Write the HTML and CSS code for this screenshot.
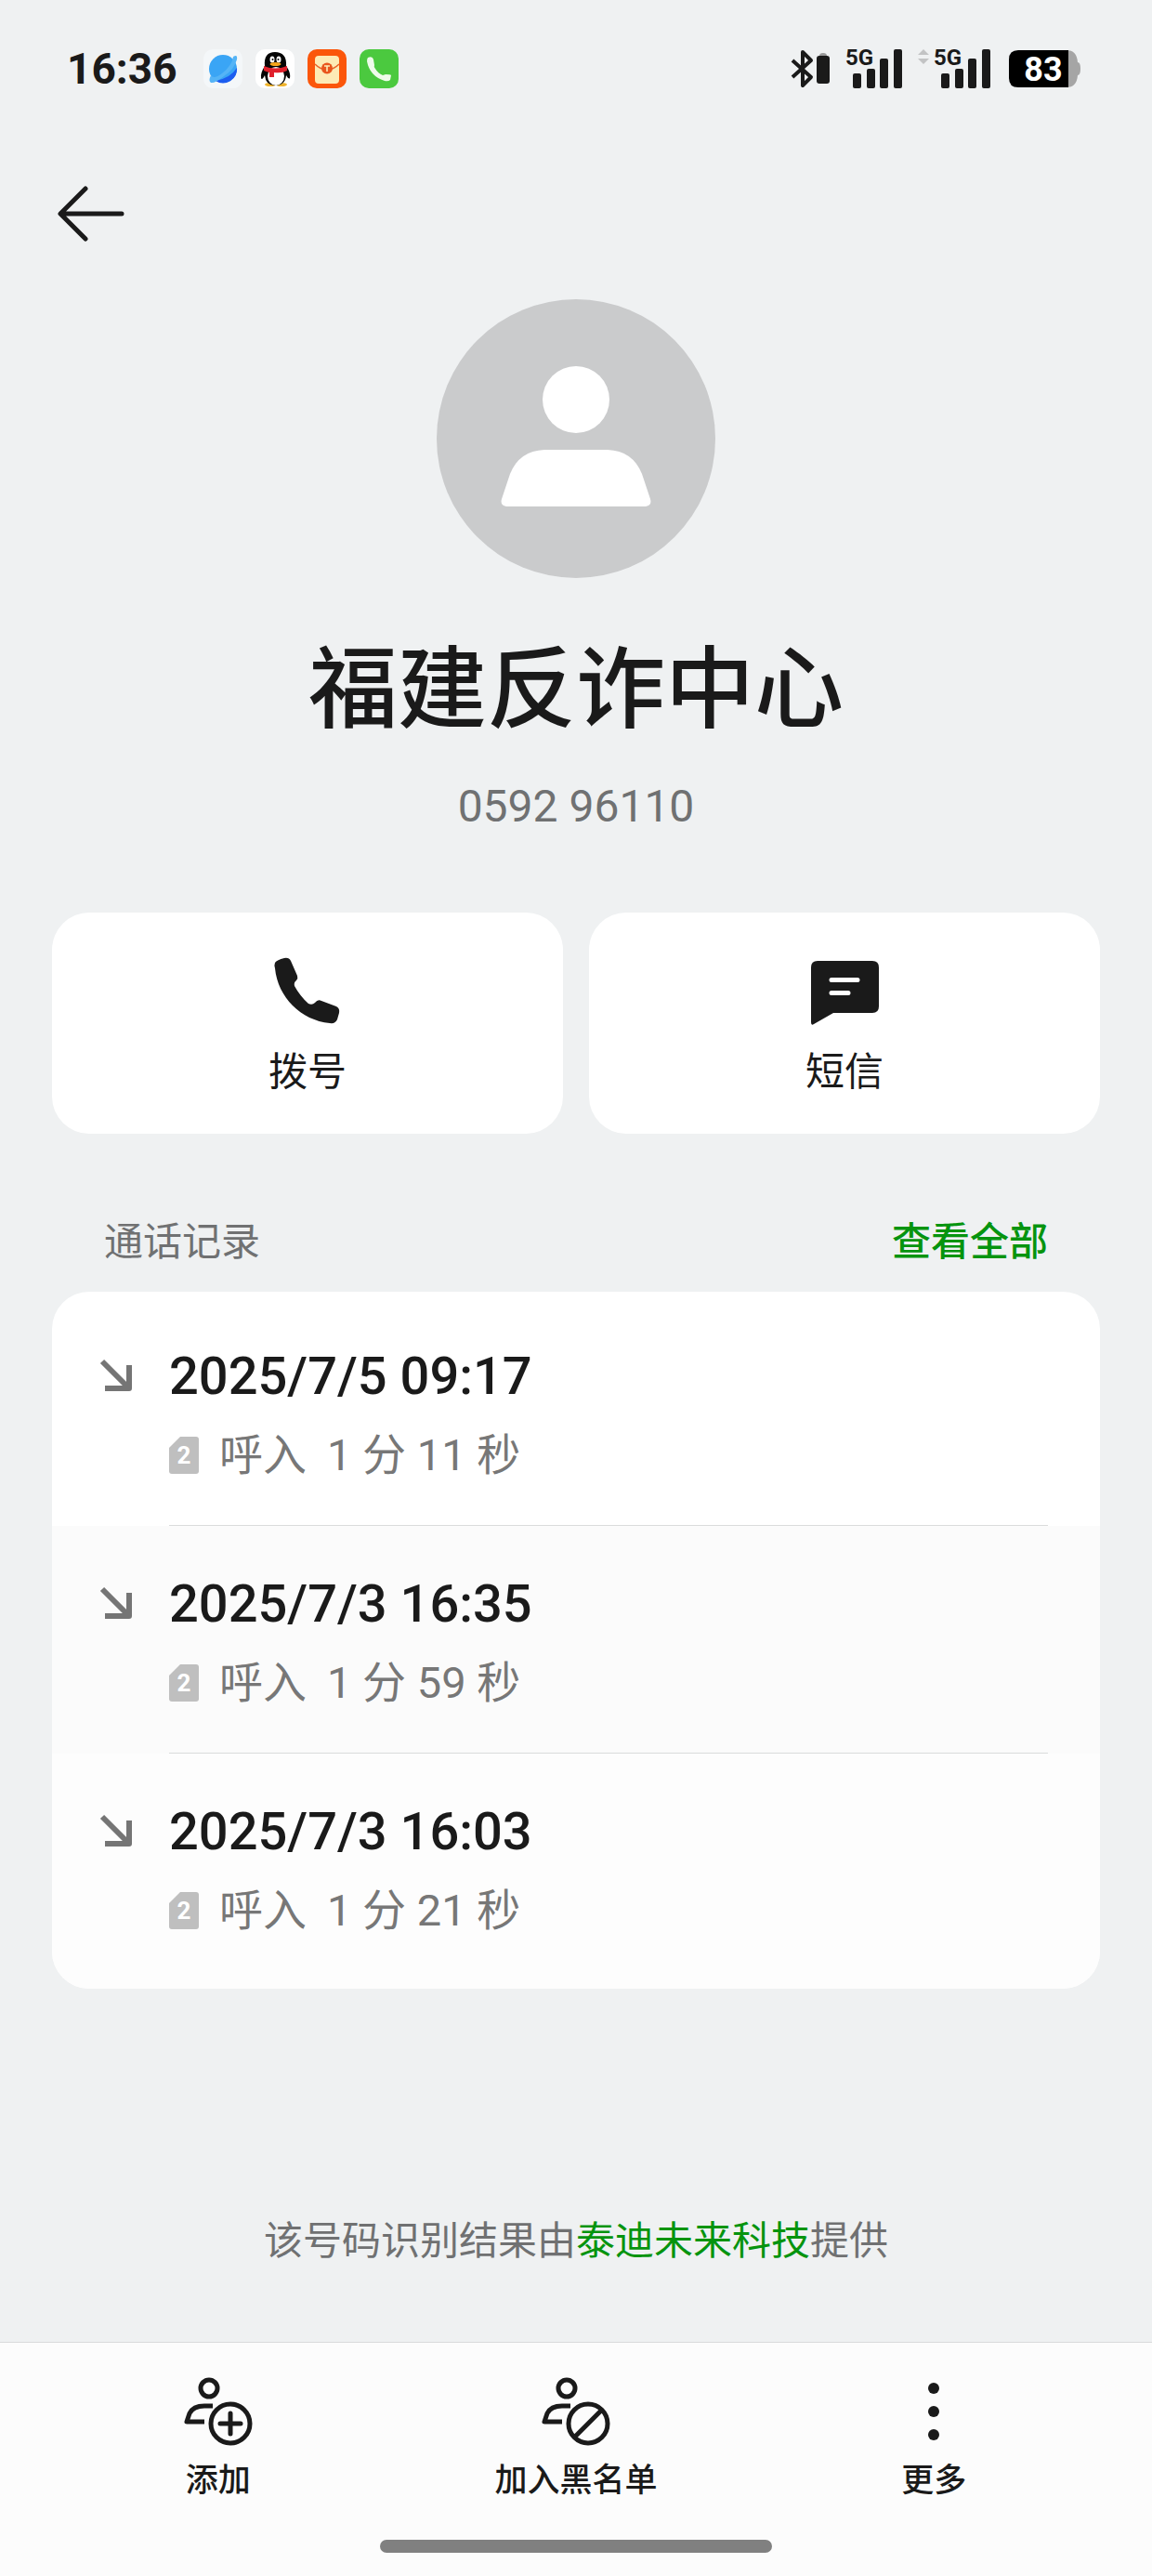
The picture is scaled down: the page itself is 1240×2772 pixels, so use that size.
FILE: index.html
```html
<!DOCTYPE html>
<html lang="zh-CN">
<head>
<meta charset="utf-8">
<meta name="viewport" content="width=device-width, initial-scale=1">
<title>福建反诈中心</title>
<link rel="stylesheet" href="styles.css">
</head>
<body>
<div class="page">
  <div class="status">
    <span class="status-time">16:36</span>
    <div class="status-apps">
      <svg class="app" viewBox="0 0 42 42"><rect width="42" height="42" rx="10" fill="#f4f7f9"/><circle cx="21" cy="21" r="15" fill="#3aa5f5"/><path d="M36 20A15 15 0 0 1 13 34Q29 31 36 20z" fill="#1c5df0"/><path d="M32 8Q37 5 36 11Q33 22 22 29Q12 37 8 36Q5 34 8 28Q11 33 20 26Q31 17 32 8z" fill="#55b4f6"/></svg>
      <svg class="app" viewBox="0 0 42 42"><rect width="42" height="42" rx="10" fill="#fff"/><ellipse cx="16" cy="38" rx="6" ry="2" fill="#efb32c"/><ellipse cx="28" cy="38" rx="6" ry="2" fill="#efb32c"/><path d="M10 18C9 8 13 3 21 3S34 8 33 18C36 22 38 27 37 31Q36 33 33 28Q32 39 21 39Q11 39 10 28Q7 34 6 31Q5 26 10 18z" fill="#050505"/><ellipse cx="22" cy="29" rx="9" ry="10" fill="#fff"/><path d="M9 18Q21 23 34 18V23Q29 26 20 25V30H15V25Q11 24 9 23z" fill="#e0202c"/><ellipse cx="18" cy="11" rx="2.500" ry="3.500" fill="#fff"/><ellipse cx="25" cy="11" rx="2.500" ry="3.500" fill="#fff"/><circle cx="18.500" cy="11" r="1" fill="#000"/><circle cx="24.500" cy="11" r="1" fill="#000"/><ellipse cx="21.500" cy="16" rx="6" ry="2" fill="#f5a51b"/></svg>
      <svg class="app" viewBox="0 0 42 42"><rect width="42" height="42" rx="10" fill="#fb560a"/><rect x="8" y="7" width="26" height="30" rx="4" fill="#fdeab5"/><path d="M8 16Q14 22 21 22T34 16" fill="none" stroke="#e8622a" stroke-width="1.500"/><circle cx="21" cy="20.500" r="6" fill="#e9551d"/><path d="M18 18H24M21 18V24" stroke="#fdeab5" stroke-width="1.600"/></svg>
      <svg class="app" viewBox="0 0 42 42"><rect width="42" height="42" rx="10" fill="#4bc93f"/><path d="M9 9Q14 7 15 11L16 17Q15 19 17 21Q20 26 25 28L28 27Q33 27 34 28L33 33Q31 35 27 34Q11 29 8 13Q8 10 9 9z" fill="#eefbea"/></svg>
    </div>
    <div class="status-system">
      <svg class="bluetooth" viewBox="0 0 42 42"><path d="M2 12L22 30L13 39V3L22 12L2 30" fill="none" stroke="#1a1a1a" stroke-width="4" stroke-linejoin="round"/><path d="M31 7Q31 4 35 4T39 7z" fill="#999"/><rect x="28" y="7" width="14" height="30" rx="3" fill="#1a1a1a"/></svg>
      <svg class="signal" viewBox="0 0 60 44"><text class="signal-text" x="-1" y="18">5G</text><g fill="#1a1a1a"><rect x="7" y="27" width="9" height="16" rx="2"/><rect x="22" y="22" width="9" height="21" rx="2"/><rect x="36" y="11" width="9" height="32" rx="2"/><rect x="51" y="1" width="9" height="42" rx="2"/></g></svg>
      <svg class="traffic" viewBox="0 0 12 44"><path d="M6 1L12 7H0zM6 17L12 11H0z" fill="#c2c3c4"/></svg>
      <svg class="signal" viewBox="0 0 60 44"><text class="signal-text" x="-1" y="18">5G</text><g fill="#1a1a1a"><rect x="7" y="27" width="9" height="16" rx="2"/><rect x="22" y="22" width="9" height="21" rx="2"/><rect x="36" y="11" width="9" height="32" rx="2"/><rect x="51" y="1" width="9" height="42" rx="2"/></g></svg>
      <svg class="battery" viewBox="0 0 77 40"><path d="M62 0Q73 0 74 13Q77 13 77 20T74 27Q73 40 62 40z" fill="#a5a5a5"/><path d="M64 0V40H10Q0 40 0 30V10Q0 0 10 0z" fill="#000"/><text class="battery-text" x="37" y="33" text-anchor="middle">83</text></svg>
    </div>
  </div>

  <header class="topbar">
    <button class="back" type="button" aria-label="返回"><svg class="back-icon" viewBox="0 0 72 60"><path d="M69 30H4M30 3L3 30L30 57" fill="none" stroke="#1a1a1a" stroke-width="5" stroke-linecap="round" stroke-linejoin="round"/></svg></button>
  </header>

  <main class="content">
    <section class="profile">
      <svg class="avatar" viewBox="0 0 300 300"><circle cx="150" cy="150" r="150" fill="#cacbcc"/><circle cx="150" cy="108" r="36" fill="#fff"/><path d="M116 162H184Q211 163 221 188L230 215Q232 222 225 223H75Q68 222 70 215L79 188Q89 163 116 162z" fill="#fff"/></svg>
      <h1 class="name">福建反诈中心</h1>
      <p class="phone">0592 96110</p>
    </section>

    <div class="actions">
      <button class="action" type="button">
        <svg class="action-icon" viewBox="0 0 72 56"><path d="M3 10Q5 7 13 5Q18 4 20 8L27 24Q28 27 26 29Q23 31 24 35Q30 46 39 54Q43 56 46 53Q49 49 53 51L69 57Q73 59 72 64L70 71Q68 76 62 75C31 72 6 47 3 16Q2 12 3 10z" fill="#1a1a1a" transform="translate(-2,-8)"/></svg>
        <span>拨号</span>
      </button>
      <button class="action" type="button">
        <svg class="action-icon" viewBox="0 0 72 56"><path d="M7 0H66Q73 0 73 7V49Q73 56 66 56H24L3 68Q0 70 0 66V7Q0 0 7 0z" fill="#1a1a1a"/><path d="M22 20.500H50M22 34.500H40" stroke="#fff" stroke-width="5" stroke-linecap="round"/></svg>
        <span>短信</span>
      </button>
    </div>

    <section class="records">
      <div class="records-head">
        <h2 class="records-title">通话记录</h2>
        <a class="link link-strong" href="#all">查看全部</a>
      </div>
      <ul class="list">
        <li class="call">
          <svg class="call-arrow" viewBox="0 0 34 34"><path d="M2 2L30 30M5 31H31V6" fill="none" stroke="#757575" stroke-width="6" stroke-linejoin="round"/></svg>
          <div class="call-body">
            <div class="call-time">2025/7/5 09:17</div>
            <div class="call-info"><svg class="sim" viewBox="0 0 32 40"><path d="M12 0H29Q32 0 32 3V37Q32 40 29 40H3Q0 40 0 37V12z" fill="#bfbfbf"/><text class="sim-text" x="16" y="29" text-anchor="middle">2</text></svg><span>呼入</span><span>1 分 11 秒</span></div>
          </div>
        </li>
        <li class="call">
          <svg class="call-arrow" viewBox="0 0 34 34"><path d="M2 2L30 30M5 31H31V6" fill="none" stroke="#757575" stroke-width="6" stroke-linejoin="round"/></svg>
          <div class="call-body">
            <div class="call-time">2025/7/3 16:35</div>
            <div class="call-info"><svg class="sim" viewBox="0 0 32 40"><path d="M12 0H29Q32 0 32 3V37Q32 40 29 40H3Q0 40 0 37V12z" fill="#bfbfbf"/><text class="sim-text" x="16" y="29" text-anchor="middle">2</text></svg><span>呼入</span><span>1 分 59 秒</span></div>
          </div>
        </li>
        <li class="call">
          <svg class="call-arrow" viewBox="0 0 34 34"><path d="M2 2L30 30M5 31H31V6" fill="none" stroke="#757575" stroke-width="6" stroke-linejoin="round"/></svg>
          <div class="call-body">
            <div class="call-time">2025/7/3 16:03</div>
            <div class="call-info"><svg class="sim" viewBox="0 0 32 40"><path d="M12 0H29Q32 0 32 3V37Q32 40 29 40H3Q0 40 0 37V12z" fill="#bfbfbf"/><text class="sim-text" x="16" y="29" text-anchor="middle">2</text></svg><span>呼入</span><span>1 分 21 秒</span></div>
          </div>
        </li>
      </ul>
    </section>

    <p class="provider">该号码识别结果由<a class="link" href="#provider">泰迪未来科技</a>提供</p>
  </main>

  <footer class="bottom">
    <nav class="tools">
      <button class="tool" type="button">
        <svg class="tool-icon" viewBox="0 0 74 74"><g fill="none" stroke="#1a1a1a" stroke-width="5"><circle cx="27" cy="12" r="9"/><path d="M31 31H22Q10 31 6 39L3 48H22" stroke-linejoin="round"/><circle cx="50" cy="50" r="21"/><path d="M39 50H61M50 39V61" stroke-linecap="round"/></g></svg>
        <span>添加</span>
      </button>
      <button class="tool" type="button">
        <svg class="tool-icon" viewBox="0 0 74 74"><g fill="none" stroke="#1a1a1a" stroke-width="5"><circle cx="27" cy="12" r="9"/><path d="M31 31H22Q10 31 6 39L3 48H22" stroke-linejoin="round"/><circle cx="50" cy="50" r="21"/><path d="M36 64L64 36"/></g></svg>
        <span>加入黑名单</span>
      </button>
      <button class="tool" type="button">
        <svg class="tool-icon" viewBox="0 0 74 74"><g fill="#1a1a1a"><circle cx="37" cy="12" r="6"/><circle cx="37" cy="37" r="6"/><circle cx="37" cy="62" r="6"/></g></svg>
        <span>更多</span>
      </button>
    </nav>
    <div class="home"></div>
  </footer>
</div>
</body>
</html>
```
FILE: styles.css
```css
* { box-sizing: border-box; }

body {
  margin: 0;
  background: #eff1f2;
  color: #1a1a1a;
  font-family: Roboto, "Noto Sans CJK SC", sans-serif;
}

h1, h2, p, ul { margin: 0; padding: 0; }
ul { list-style: none; }
svg { display: block; flex: none; overflow: visible; }

button {
  border: 0;
  padding: 0;
  background: none;
  color: inherit;
  font: inherit;
}

.page {
  display: flex;
  flex-direction: column;
  min-height: 100vh;
}

/* status bar */
.status {
  display: flex;
  align-items: center;
  padding: 48px 77px 0 72px;
  height: 100px;
}
.status-time {
  font-size: 46px;
  line-height: 52px;
  font-weight: 700;
}
.status-apps { display: flex; gap: 14px; margin-left: 28px; }
.app { width: 42px; height: 42px; }
.status-system { display: flex; align-items: center; margin-left: auto; }
.bluetooth { width: 42px; height: 42px; margin-right: 18px; }
.signal { width: 60px; height: 44px; }
.signal-text { font-size: 24px; font-weight: 700; fill: #1a1a1a; }
.traffic { width: 12px; height: 44px; margin: 0 6px 0 17px; }
.battery { width: 77px; height: 40px; margin-left: 20px; }
.battery-text { font-size: 36px; font-weight: 700; fill: #fff; }

.topbar { padding: 84px 56px 0; }
.back { display: block; padding: 16px 6px; }
.back-icon { width: 72px; height: 60px; }

.content {
  flex: 1;
  display: flex;
  flex-direction: column;
  padding: 46px 56px 80px;
}

/* contact */
.profile { display: flex; flex-direction: column; align-items: center; }
.avatar { width: 300px; height: 300px; }
.name {
  margin-top: 64px;
  font-size: 96px;
  line-height: 112px;
  font-weight: 500;
}
.phone {
  margin-top: 38px;
  font-size: 48px;
  line-height: 64px;
  font-weight: 400;
  color: #707172;
}

.actions {
  display: grid;
  grid-template-columns: 1fr 1fr;
  gap: 28px;
  margin-top: 82px;
}
.action {
  display: flex;
  flex-direction: column;
  align-items: center;
  gap: 36px;
  padding: 52px 0 38px;
  border-radius: 40px;
  background: #fff;
  font-size: 42px;
  line-height: 56px;
}
.action-icon { width: 72px; height: 56px; }

/* call records */
.records { margin-top: 89px; }
.records-head {
  display: flex;
  justify-content: space-between;
  padding: 0 56px 25px;
  font-size: 42px;
  line-height: 56px;
}
.records-title { font-size: 42px; font-weight: 400; color: #707172; }
.link { color: #06940f; text-decoration: none; }
.link-strong { font-weight: 500; }

.list { overflow: hidden; border-radius: 40px; background: #fff; }
.call { display: flex; gap: 40px; padding: 0 56px 0 52px; }
.call:first-child { padding-top: 7px; }
.call:nth-child(2) { background: #fbfbfb; }
.call:last-child { padding-bottom: 8px; background: #fdfdfd; }
.call-arrow { width: 34px; height: 34px; margin-top: 66px; }
.call-body {
  flex: 1;
  padding: 52px 0 47px;
  border-bottom: 1px solid #dadbdb;
}
.call:last-child .call-body { border-bottom-color: transparent; }
.call-time { font-size: 56px; line-height: 64px; font-weight: 500; }
.call-info {
  display: flex;
  align-items: center;
  gap: 22px;
  margin-top: 25px;
  font-size: 47px;
  line-height: 56px;
  font-weight: 400;
  color: #777;
}
.sim { width: 32px; height: 40px; }
.sim-text { font-size: 26px; font-weight: 700; fill: #fff; }

.provider {
  margin-top: auto;
  padding-top: 120px;
  text-align: center;
  font-size: 42px;
  line-height: 56px;
  color: #707172;
}

/* bottom bar */
.bottom { border-top: 1px solid #d9dadb; background: #fcfcfc; }
.tools {
  display: grid;
  grid-template-columns: repeat(3, 1fr);
  padding: 37px 42px 0;
}
.tool {
  display: flex;
  flex-direction: column;
  align-items: center;
  gap: 14px;
  font-size: 35px;
  line-height: 48px;
  font-weight: 500;
}
.tool-icon { width: 74px; height: 74px; }
.home {
  width: 34%;
  height: 14px;
  margin: 39px auto 25px;
  border-radius: 7px;
  background: #808080;
}
```
